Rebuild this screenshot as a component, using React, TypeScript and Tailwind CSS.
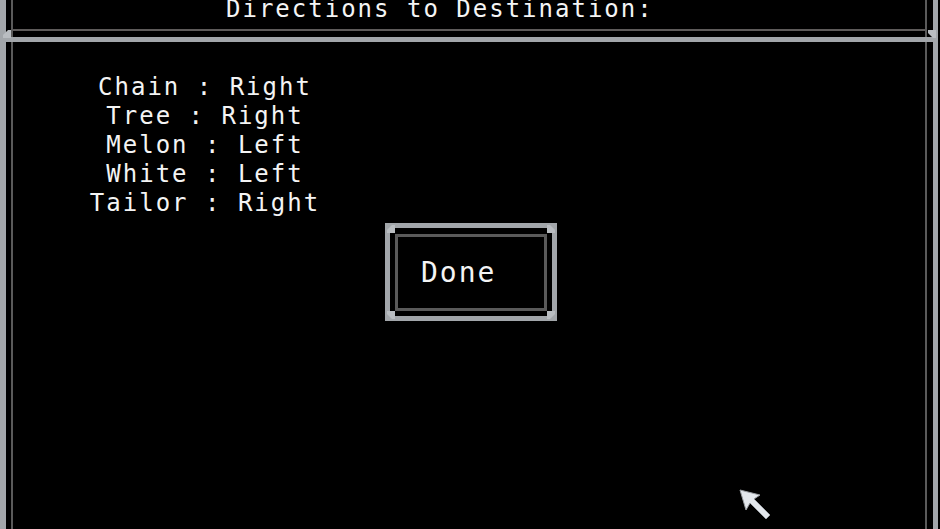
const mono = "font-['DejaVu_Sans_Mono','Liberation_Mono',monospace]";

const directions = [
  ['Chain', 'Right'],
  ['Tree', 'Right'],
  ['Melon', 'Left'],
  ['White', 'Left'],
  ['Tailor', 'Right'],
];

function Bevel({ className }: { className: string }) {
  // little light mitre where the frame lines meet
  return (
    <svg className={`absolute w-[8px] h-[8px] ${className}`} viewBox="0 0 8 8">
      <polygon points="0,0 8,0 8,3 3,8 0,8" fill="#b9bdc1" />
    </svg>
  );
}

function Cursor() {
  return (
    <svg className="absolute left-[739px] top-[489px] w-[34px] h-[34px]" viewBox="0 0 34 34">
      <polygon
        points="1,1 21,6 15,10 31,26 27,30 11,14 7,21"
        fill="#e3e7ec"
        stroke="#9a9ea3"
        strokeWidth="1"
      />
    </svg>
  );
}

export default function App() {
  return (
    <div className={`relative w-[940px] h-[529px] overflow-hidden bg-black text-[#f4f4f4] ${mono}`}>
      <div className="relative flex h-full w-[938px] flex-col border-l-[6px] border-r-[5px] border-[#a2a6aa]">
        {/* title panel */}
        <div className="h-[37px] pl-[5px] pr-[6px]">
          <div className="flex h-full flex-col border-x-2 border-[#5a5a5a]">
            <div className="h-[29px] overflow-hidden pl-[213px]">
              <div className="-mt-[5px] whitespace-pre text-[24px] leading-[29px] tracking-[2px]">
                Directions to Destination:
              </div>
            </div>
            <div className="h-[2px] bg-[#5e5b5a]" />
          </div>
        </div>
        <div className="h-[5px] bg-[#a2a6aa]" />
        <Bevel className="left-[-3px] top-[30px] rotate-180" />
        <Bevel className="right-[-3px] top-[30px] rotate-90" />

        {/* body panel */}
        <div className="flex-1 pl-[5px] pr-[6px]">
          <div className="flex h-full flex-col items-start gap-[5px] border-x-2 border-[#5a5a5a] pt-[31px]">
            <div className="ml-[62px] flex w-[260px] flex-col items-center text-[24px] leading-[29px] tracking-[2px]">
              {directions.map(([name, dir]) => (
                <div key={name} className="whitespace-pre">
                  {name} : {dir}
                </div>
              ))}
            </div>

            <div className="relative ml-[372px] h-[98px] w-[172px] border-[5px] border-[#a2a6aa] px-[5px] pt-[6px] pb-[5px]">
              <div className="flex h-full items-center border-[3px] border-[#5a5a5a] pl-[23px] text-[28px] leading-[28px] tracking-[2px]">
                Done
              </div>
              <Bevel className="left-[-3px] top-[-3px] rotate-180" />
              <Bevel className="right-[-3px] top-[-3px] -rotate-90" />
              <Bevel className="left-[-3px] bottom-[-3px] rotate-90" />
              <Bevel className="right-[-3px] bottom-[-3px]" />
            </div>
          </div>
        </div>
      </div>
      <Cursor />
    </div>
  );
}
